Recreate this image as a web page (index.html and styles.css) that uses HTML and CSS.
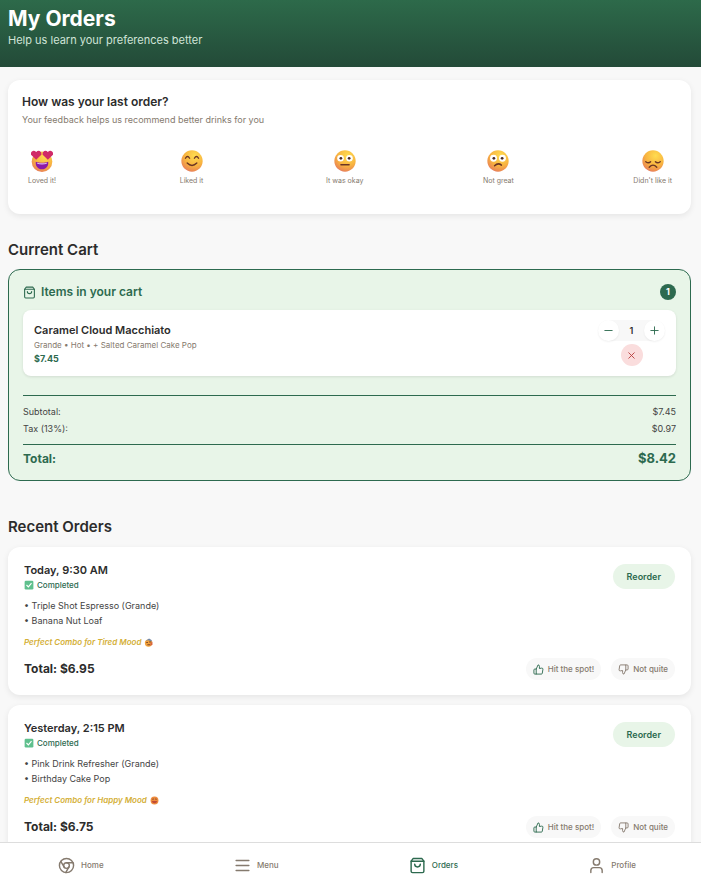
FILE: index.html
```html
<!DOCTYPE html>
<html lang="en">
<head>
<meta charset="utf-8">
<meta name="viewport" content="width=device-width, initial-scale=1">
<title>My Orders</title>
<link rel="stylesheet" href="styles.css">
</head>
<body>
<svg class="defs" aria-hidden="true">
  <defs>
    <radialGradient id="skin" cx="0.62" cy="0.25" r="0.85">
      <stop offset="0" stop-color="#ffdc50"/>
      <stop offset="0.55" stop-color="#f8b440"/>
      <stop offset="0.85" stop-color="#ec8a52"/>
      <stop offset="1" stop-color="#d66a70"/>
    </radialGradient>
    <symbol id="bag" viewBox="0 0 24 24"><path d="M6 2 3 6v14a2 2 0 0 0 2 2h14a2 2 0 0 0 2-2V6l-3-4z"/><path d="M3 6h18M16 10a4 4 0 0 1-8 0"/></symbol>
    <symbol id="up" viewBox="0 0 24 24"><path d="M14 9V5a3 3 0 0 0-3-3l-4 9v11h11.28a2 2 0 0 0 2-1.7l1.38-9a2 2 0 0 0-2-2.3zM7 22H4a2 2 0 0 1-2-2v-7a2 2 0 0 1 2-2h3"/></symbol>
    <symbol id="down" viewBox="0 0 24 24"><path d="M10 15v4a3 3 0 0 0 3 3l4-9V2H5.72a2 2 0 0 0-2 1.7l-1.38 9a2 2 0 0 0 2 2.3zm7-13h2.67A2.31 2.31 0 0 1 22 4v7a2.31 2.31 0 0 1-2.33 2H17"/></symbol>
    <symbol id="check" viewBox="0 0 16 16"><rect x="1" y="1" width="14" height="14" rx="2" fill="#5fc08d"/><path d="m4 8 3 3 5-6" fill="none" stroke="#fff" stroke-width="1.8"/></symbol>
  </defs>
</svg>
<main class="page">
  <header class="header">
    <h1>My Orders</h1>
    <p>Help us learn your preferences better</p>
  </header>
  <div class="content">
    <section class="card feedback">
      <h2>How was your last order?</h2>
      <p>Your feedback helps us recommend better drinks for you</p>
      <div class="ratings">
        <button type="button" class="rating">
          <svg viewBox="0 0 32 32"><circle cx="16" cy="17" r="15" fill="url(#skin)"/><path d="M7 17c5 2 13 2 18 0 1 6-3 11-9 11s-10-5-9-11z" fill="#8c18a8"/><path d="M9 18.500c5 1 9 1 14 0v1.500c-4 1.500-10 1.500-14 0z" fill="#e0b8ee"/><path d="M7.500 14 0 7C-1 2 4-1 7.500 3 11-1 16 2 15 7z" fill="#d02a68"/><path d="M24.500 14 17 7C16 2 21-1 24.500 3 28-1 33 2 32 7z" fill="#d02a68"/></svg>
          <span>Loved it!</span>
        </button>
        <button type="button" class="rating">
          <svg viewBox="0 0 32 32"><circle cx="16" cy="16" r="15.500" fill="url(#skin)"/><g fill="none" stroke="#6b3524" stroke-width="2" stroke-linecap="round"><path d="M6.500 12q3-5 6 0M19.500 12q3-5 6 0M9 19q7 7 14 0"/></g></svg>
          <span>Liked it</span>
        </button>
        <button type="button" class="rating">
          <svg viewBox="0 0 32 32"><circle cx="16" cy="16" r="15.500" fill="url(#skin)"/><circle cx="9.500" cy="12" r="4.800" fill="#fff"/><circle cx="22.500" cy="12" r="4.800" fill="#fff"/><circle cx="10" cy="12" r="2" fill="#492b26"/><circle cx="22" cy="12" r="2" fill="#492b26"/><path d="M10 21.500h12" stroke="#6b3524" stroke-width="2" stroke-linecap="round"/></svg>
          <span>It was okay</span>
        </button>
        <button type="button" class="rating">
          <svg viewBox="0 0 32 32"><circle cx="16" cy="16" r="15.500" fill="url(#skin)"/><circle cx="9.500" cy="12" r="5" fill="#fff"/><circle cx="22.500" cy="12" r="5" fill="#fff"/><circle cx="10" cy="12" r="2" fill="#492b26"/><circle cx="22" cy="12" r="2" fill="#492b26"/><path d="M11 23q5-5 10-1" fill="none" stroke="#6b3524" stroke-width="2.200" stroke-linecap="round"/></svg>
          <span>Not great</span>
        </button>
        <button type="button" class="rating">
          <svg viewBox="0 0 32 32"><circle cx="16" cy="16" r="15.500" fill="url(#skin)"/><g fill="none" stroke="#6b3524" stroke-width="2" stroke-linecap="round"><path d="M5.500 17q4 3 7 0M19.500 17q3 3 7 0M10.500 25q5.500-6 11 0"/></g></svg>
          <span>Didn't like it</span>
        </button>
      </div>
    </section>

    <h2 class="section-title">Current Cart</h2>
    <section class="cart">
      <div class="cart-head">
        <svg class="icon"><use href="#bag"/></svg>
        <h3>Items in your cart</h3>
        <span class="count">1</span>
      </div>
      <div class="cart-item">
        <div class="item-info">
          <h4>Caramel Cloud Macchiato</h4>
          <p>Grande • Hot • + Salted Caramel Cake Pop</p>
          <strong>$7.45</strong>
        </div>
        <div class="item-actions">
          <div class="stepper">
            <button type="button" aria-label="Decrease quantity"><svg viewBox="0 0 12 12"><path d="M2 6h8"/></svg></button>
            <span>1</span>
            <button type="button" aria-label="Increase quantity"><svg viewBox="0 0 12 12"><path d="M2 6h8M6 2v8"/></svg></button>
          </div>
          <button type="button" class="remove" aria-label="Remove item"><svg viewBox="0 0 12 12"><path d="m3 3 6 6M9 3 3 9"/></svg></button>
        </div>
      </div>
      <dl class="summary">
        <div><dt>Subtotal:</dt><dd>$7.45</dd></div>
        <div><dt>Tax (13%):</dt><dd>$0.97</dd></div>
        <div class="grand"><dt>Total:</dt><dd>$8.42</dd></div>
      </dl>
    </section>

    <h2 class="section-title">Recent Orders</h2>
    <article class="card order">
      <div class="order-head">
        <div>
          <h3>Today, 9:30 AM</h3>
          <p class="status"><svg><use href="#check"/></svg>Completed</p>
        </div>
        <button type="button" class="reorder">Reorder</button>
      </div>
      <ul><li>• Triple Shot Espresso (Grande)</li><li>• Banana Nut Loaf</li></ul>
      <p class="mood">Perfect Combo for Tired Mood
        <svg viewBox="0 0 16 16"><circle cx="8" cy="9" r="6.500" fill="#f2a23c"/><path d="M3 5 9 1l5 3-1 2-5-2z" fill="#7188a8"/><path d="M4 8h3M9 7h4M6 12h5" stroke="#6b3524" stroke-width="1.500"/><path d="m11 10 4-4v5l-3 3z" fill="#d9633f"/></svg></p>
      <div class="order-foot">
        <strong>Total: $6.95</strong>
        <button type="button" class="vote good"><svg class="icon"><use href="#up"/></svg>Hit the spot!</button>
        <button type="button" class="vote"><svg class="icon"><use href="#down"/></svg>Not quite</button>
      </div>
    </article>
    <article class="card order">
      <div class="order-head">
        <div>
          <h3>Yesterday, 2:15 PM</h3>
          <p class="status"><svg><use href="#check"/></svg>Completed</p>
        </div>
        <button type="button" class="reorder">Reorder</button>
      </div>
      <ul><li>• Pink Drink Refresher (Grande)</li><li>• Birthday Cake Pop</li></ul>
      <p class="mood">Perfect Combo for Happy Mood
        <svg viewBox="0 0 16 16"><circle cx="8" cy="8" r="7" fill="#ee8b3d"/><path d="M4 6q1.500-2 3 0M9 6q1.500-2 3 0" fill="none" stroke="#6b3524" stroke-width="1.300"/><path d="M3 9h10q-1 4-5 4T3 9z" fill="#c04a35"/></svg></p>
      <div class="order-foot">
        <strong>Total: $6.75</strong>
        <button type="button" class="vote good"><svg class="icon"><use href="#up"/></svg>Hit the spot!</button>
        <button type="button" class="vote"><svg class="icon"><use href="#down"/></svg>Not quite</button>
      </div>
    </article>
  </div>
</main>
<nav class="nav">
  <a href="#home"><svg class="icon" viewBox="0 0 24 24"><circle cx="12" cy="12" r="10"/><circle cx="12" cy="12" r="4"/><path d="M21.170 8H12M3.950 6.060 8.540 14M10.880 21.940 15.460 14"/></svg>Home</a>
  <a href="#menu"><svg class="icon" viewBox="0 0 24 24"><path d="M3 5h18M3 12h18M3 19h18"/></svg>Menu</a>
  <a href="#orders" class="active" aria-current="page"><svg class="icon"><use href="#bag"/></svg>Orders</a>
  <a href="#profile"><svg class="icon" viewBox="0 0 24 24"><path d="M20 22v-3a4 4 0 0 0-4-4H8a4 4 0 0 0-4 4v3"/><circle cx="12" cy="7" r="4.500"/></svg>Profile</a>
</nav>
</body>
</html>
```
FILE: styles.css
```css
:root {
  --green: #2d6a4f;
  --mint: #e8f5e8;
  --ink: #2c2c2c;
  --text: #444;
  --muted: #857a6e;
}

* { box-sizing: border-box; }

body {
  display: flex;
  flex-direction: column;
  height: 100vh;
  margin: 0;
  background: #f8f8f8;
  color: var(--ink);
  font-family: Inter, "Liberation Sans", sans-serif;
  font-size: 9px;
  line-height: 12px;
}

h1, h2, h3, h4, p, ul, dl, dd { margin: 0; padding: 0; }
h2, h3, h4 { font-weight: 600; }
ul { list-style: none; }
button { border: 0; padding: 0; font: inherit; color: inherit; cursor: pointer; }
svg { display: block; flex: none; }
.defs { position: absolute; width: 0; height: 0; }

.icon, .stepper svg, .remove svg {
  fill: none;
  stroke: currentColor;
  stroke-width: 2;
  stroke-linecap: round;
  stroke-linejoin: round;
}

.page {
  flex: 1;
  min-height: 0;
  overflow-y: auto;
  scrollbar-width: none;
}

.header {
  padding: 6px 8px 19px;
  background: linear-gradient(#2d6a4a, #234a38);
  color: #fff;
}
.header h1 { font-size: 21px; line-height: 26px; font-weight: 700; }
.header p { margin-top: 1px; font-size: 11px; line-height: 15px; color: #d0e4d8; }

.content { padding: 13px 10px 20px 8px; }

.card {
  background: #fff;
  border-radius: 12px;
  box-shadow: 0 2px 6px rgba(0, 0, 0, 0.08);
}

.feedback { padding: 14px 14px 23px; }
.feedback h2 { font-size: 12px; line-height: 16px; }
.feedback p { margin-top: 4px; font-size: 9px; color: var(--muted); }
.ratings { display: flex; justify-content: space-between; margin-top: 19px; }
.rating {
  display: flex;
  flex-direction: column;
  align-items: center;
  gap: 4px;
  min-width: 40px;
  padding: 5px;
  background: none;
  color: var(--muted);
  font-size: 7px;
  line-height: 10px;
}
.rating svg { width: 22px; height: 22px; }

.section-title { margin: 26px 0 10px; font-size: 15px; line-height: 19px; }

.cart {
  padding: 14px;
  border: 1px solid var(--green);
  border-radius: 12px;
  background: var(--mint);
}
.cart + .section-title { margin: 36px 0 11px; }
.cart-head { display: flex; align-items: center; gap: 5px; color: var(--green); }
.cart-head .icon { width: 13px; height: 13px; }
.cart-head h3 { flex: 1; font-size: 12px; line-height: 16px; }
.count {
  width: 16px;
  border-radius: 8px;
  background: var(--green);
  color: #fff;
  font-weight: 700;
  line-height: 16px;
  text-align: center;
}
.cart-item {
  display: flex;
  justify-content: space-between;
  align-items: center;
  margin-top: 10px;
  padding: 10px 11px;
  border-radius: 8px;
  background: #fff;
  box-shadow: 0 1px 3px rgba(0, 0, 0, 0.1);
}
.item-info h4 { font-size: 11px; line-height: 16px; }
.item-info p { margin: 1px 0 2px; font-size: 8px; color: var(--muted); }
.item-info strong { display: block; color: var(--green); }
.item-actions { display: flex; flex-direction: column; align-items: center; gap: 3px; }
.stepper { display: flex; align-items: center; border-radius: 11px; background: #f8f8f8; }
.stepper span { width: 25px; text-align: center; font-weight: 600; }
.stepper button, .remove {
  display: grid;
  place-items: center;
  width: 21px;
  height: 21px;
  border-radius: 50%;
  background: #fff;
  box-shadow: 0 1px 2px rgba(0, 0, 0, 0.06);
  color: var(--green);
}
.stepper svg, .remove svg { width: 11px; height: 11px; stroke-width: 1; }
.remove { width: 22px; height: 22px; background: #fadddd; color: #b84040; box-shadow: none; }

.summary { margin-top: 19px; padding-top: 7px; border-top: 1px solid var(--green); color: var(--text); }
.summary div { display: flex; justify-content: space-between; line-height: 17px; }
.summary .grand {
  margin-top: 7px;
  padding-top: 6px;
  border-top: 1px solid var(--green);
  color: var(--green);
  font-size: 12px;
  font-weight: 700;
  line-height: 15px;
}
.grand dd { font-size: 13px; }

.order { padding: 15px 16px; }
.order + .order { margin-top: 10px; }
.order-head { display: flex; justify-content: space-between; align-items: flex-start; }
.order-head h3 { font-size: 11px; line-height: 16px; }
.status { display: flex; align-items: center; gap: 3px; margin-top: 1px; font-size: 8px; font-weight: 500; color: var(--green); }
.status svg { width: 10px; height: 10px; }
.reorder {
  margin-top: 2px;
  padding: 0 14px;
  border-radius: 13px;
  background: var(--mint);
  color: var(--green);
  font-weight: 600;
  line-height: 25px;
}
.order ul { margin-top: 7px; line-height: 15px; color: var(--text); }
.mood { display: flex; align-items: center; gap: 3px; margin-top: 8px; font-size: 8px; font-style: italic; font-weight: 600; color: #d4af37; }
.mood svg { width: 9px; height: 9px; }
.order-foot { display: flex; align-items: center; gap: 10px; margin-top: 10px; }
.order-foot strong { flex: 1; font-size: 12px; line-height: 16px; font-weight: 700; }
.vote {
  display: flex;
  align-items: center;
  gap: 4px;
  padding: 5px 7px;
  border-radius: 11px;
  background: #f8f8f8;
  color: var(--muted);
  font-size: 8px;
  font-weight: 500;
}
.vote .icon { width: 11px; height: 11px; }
.vote.good .icon { color: var(--green); }

.nav {
  display: flex;
  justify-content: space-between;
  padding: 14px 65px 21px 58px;
  border-top: 1px solid #ddd;
  background: #fff;
}
.nav a {
  display: flex;
  align-items: center;
  gap: 6px;
  color: var(--muted);
  font-size: 8px;
  font-weight: 500;
  line-height: 17px;
  text-decoration: none;
}
.nav .icon { width: 17px; height: 17px; }
.nav a.active { color: var(--green); }
```
